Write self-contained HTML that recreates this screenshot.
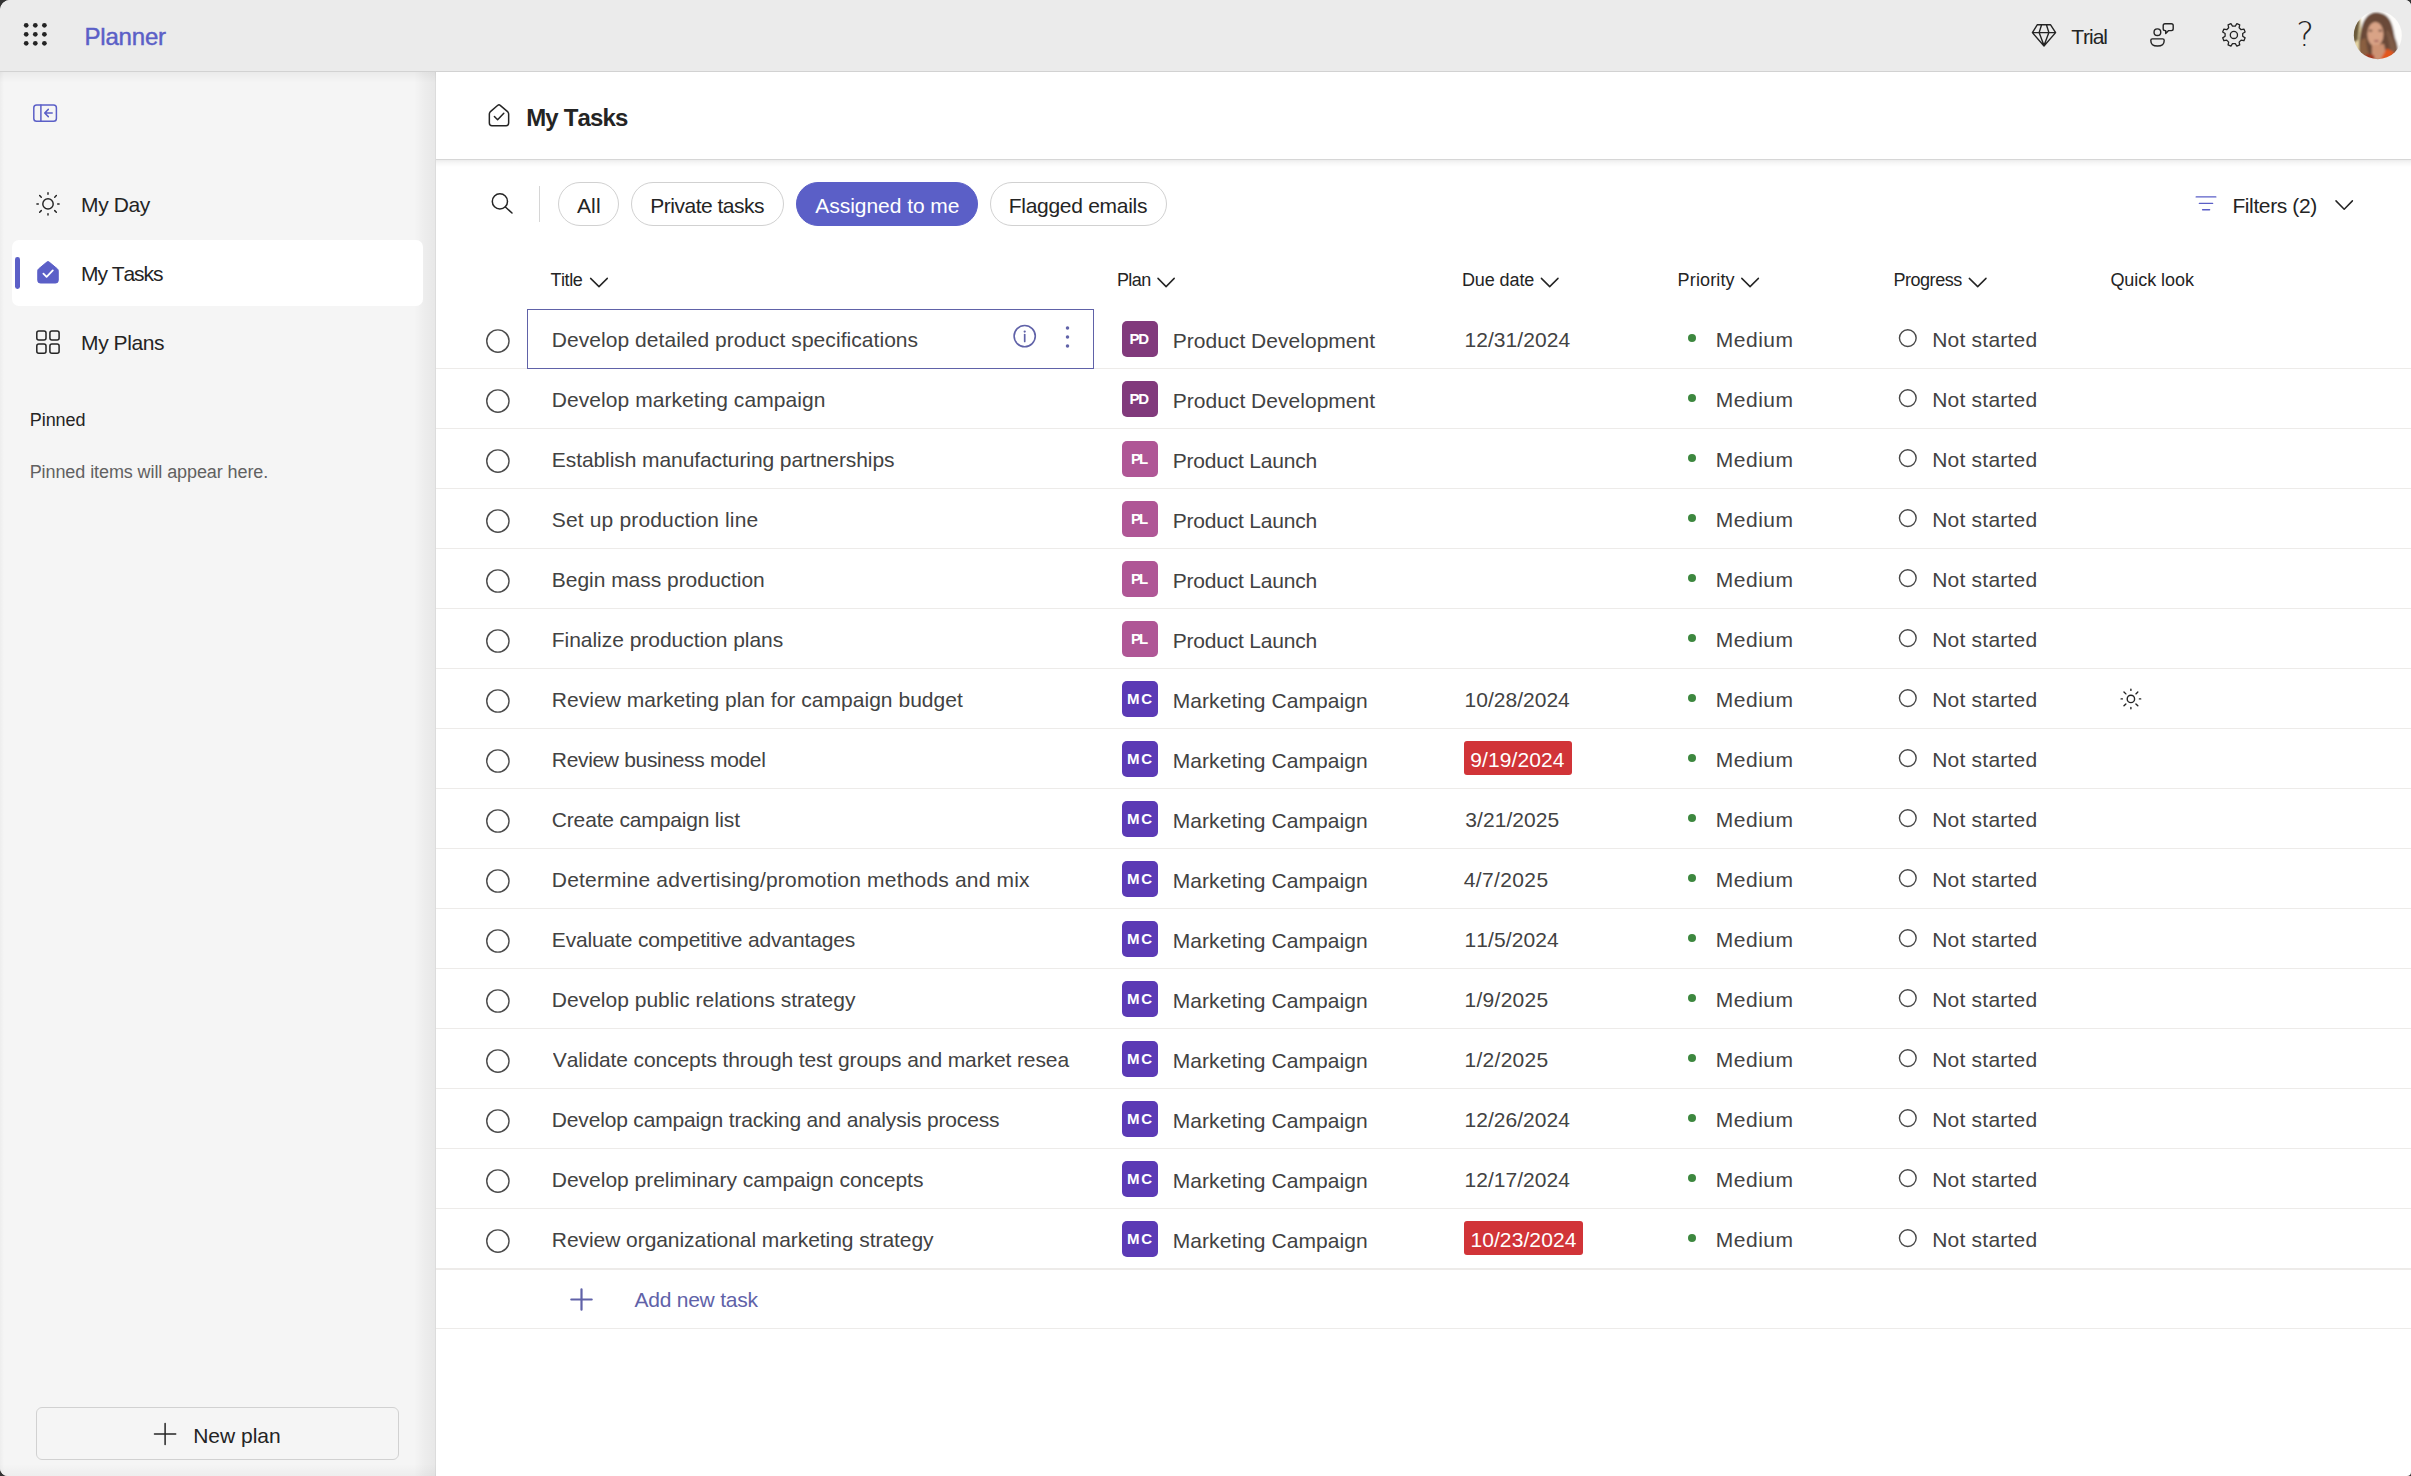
<!DOCTYPE html>
<html lang="en"><head><meta charset="utf-8"><title>Planner - My Tasks</title>
<style>
*{box-sizing:border-box;margin:0;padding:0}
html,body{width:2411px;height:1476px;overflow:hidden;background:#333}
body{font-family:"Liberation Sans",sans-serif;font-kerning:none;position:relative}
#app{position:absolute;left:0;top:0;width:2411px;height:1476px;overflow:hidden;background:#fff;border-radius:10px 6px 4px 8px}
.abs,.t,.bdg,.over,.rl,.ck,.pd,.pc,svg{position:absolute}
.t{white-space:nowrap;line-height:30px;height:30px}
#hdr{left:0;top:0;width:2411px;height:72px;background:#ebebeb;border-bottom:1px solid #d2d2d2}
#side{left:0;top:72px;width:436px;height:1404px;background:linear-gradient(180deg,rgba(0,0,0,.045) 0,rgba(0,0,0,0) 11px),linear-gradient(0deg,rgba(0,0,0,.03) 0,rgba(0,0,0,0) 12px),linear-gradient(90deg,rgba(0,0,0,.03) 0,rgba(0,0,0,0) 4px,rgba(0,0,0,0) 414px,rgba(0,0,0,.03) 424px,rgba(0,0,0,.055) 434.5px,rgba(0,0,0,.1) 435px,rgba(0,0,0,.1) 436px),#f5f5f5}
#sel{left:12px;top:240px;width:411px;height:66px;background:#fff;border-radius:7px}
#selbar{left:15.3px;top:256.8px;width:4.7px;height:32.6px;background:#5b5fc7;border-radius:2.4px}
#newplan{left:36px;top:1407px;width:363px;height:52.5px;border:1px solid #d1d1d1;border-radius:6px;background:#f5f5f5}
#tbar{left:436px;top:72px;width:1975px;height:87px;background:#fff}
#tsh{left:436px;top:159px;width:1975px;height:8px;background:linear-gradient(180deg,rgba(0,0,0,.16) 0,rgba(0,0,0,.16) 1px,rgba(0,0,0,.075) 1px,rgba(0,0,0,.03) 4px,rgba(0,0,0,0) 8px)}
.pill{height:44px;border:1px solid #d1d1d1;border-radius:22px;top:182px;background:#fff}
.pill.on{background:#5b5fc7;border-color:#5b5fc7}
#vdiv{left:539px;top:186px;width:1px;height:36px;background:#d6d6d6}
.bdg{width:36px;height:36px;border-radius:5px}
.over{height:34px;background:#d13438;border-radius:3px}
.rl{left:436px;width:1975px;height:1px;background:#edebe9}
.ck{left:486px;width:24px;height:24px;border:1.6px solid #4a4a4a;border-radius:50%}
.pd{left:1687.8px;width:8.2px;height:8.2px;border-radius:50%;background:#3d883f}
.pc{left:1898.8px;width:18px;height:18px;border:1.4px solid #4a4a4a;border-radius:50%}
#selbox{left:527px;top:309px;width:567px;height:60px;border:1px solid #6062a8}
</style></head><body><div id="app">
<div id="hdr" class="abs"></div>
<div id="side" class="abs"></div>
<div id="sel" class="abs"></div><div id="selbar" class="abs"></div>
<div id="newplan" class="abs"></div>
<div id="tbar" class="abs"></div><div id="tsh" class="abs"></div>
<div id="vdiv" class="abs"></div>
<div class="abs pill" style="left:558px;width:61px"></div>
<div class="abs pill" style="left:631px;width:153px"></div>
<div class="abs pill on" style="left:796px;width:182px"></div>
<div class="abs pill" style="left:990px;width:177px"></div>
<div class="bdg" style="left:1122px;top:321px;background:#813a7c"></div>
<div class="rl" style="top:368px"></div>
<div class="pd" style="top:334.2px"></div>
<div class="bdg" style="left:1122px;top:381px;background:#813a7c"></div>
<div class="rl" style="top:428px"></div>
<div class="pd" style="top:394.2px"></div>
<div class="bdg" style="left:1122px;top:441px;background:#af5796"></div>
<div class="rl" style="top:488px"></div>
<div class="pd" style="top:454.2px"></div>
<div class="bdg" style="left:1122px;top:501px;background:#af5796"></div>
<div class="rl" style="top:548px"></div>
<div class="pd" style="top:514.2px"></div>
<div class="bdg" style="left:1122px;top:561px;background:#af5796"></div>
<div class="rl" style="top:608px"></div>
<div class="pd" style="top:574.2px"></div>
<div class="bdg" style="left:1122px;top:621px;background:#af5796"></div>
<div class="rl" style="top:668px"></div>
<div class="pd" style="top:634.2px"></div>
<div class="bdg" style="left:1122px;top:681px;background:#5b3ab5"></div>
<div class="rl" style="top:728px"></div>
<div class="pd" style="top:694.2px"></div>
<div class="bdg" style="left:1122px;top:741px;background:#5b3ab5"></div>
<div class="over" style="left:1464px;top:741px;width:108.0px"></div>
<div class="rl" style="top:788px"></div>
<div class="pd" style="top:754.2px"></div>
<div class="bdg" style="left:1122px;top:801px;background:#5b3ab5"></div>
<div class="rl" style="top:848px"></div>
<div class="pd" style="top:814.2px"></div>
<div class="bdg" style="left:1122px;top:861px;background:#5b3ab5"></div>
<div class="rl" style="top:908px"></div>
<div class="pd" style="top:874.2px"></div>
<div class="bdg" style="left:1122px;top:921px;background:#5b3ab5"></div>
<div class="rl" style="top:968px"></div>
<div class="pd" style="top:934.2px"></div>
<div class="bdg" style="left:1122px;top:981px;background:#5b3ab5"></div>
<div class="rl" style="top:1028px"></div>
<div class="pd" style="top:994.2px"></div>
<div class="bdg" style="left:1122px;top:1041px;background:#5b3ab5"></div>
<div class="rl" style="top:1088px"></div>
<div class="pd" style="top:1054.2px"></div>
<div class="bdg" style="left:1122px;top:1101px;background:#5b3ab5"></div>
<div class="rl" style="top:1148px"></div>
<div class="pd" style="top:1114.2px"></div>
<div class="bdg" style="left:1122px;top:1161px;background:#5b3ab5"></div>
<div class="rl" style="top:1208px"></div>
<div class="pd" style="top:1174.2px"></div>
<div class="bdg" style="left:1122px;top:1221px;background:#5b3ab5"></div>
<div class="over" style="left:1464px;top:1221px;width:119.0px"></div>
<div class="rl" style="top:1268px"></div>
<div class="pd" style="top:1234.2px"></div>
<div id="selbox" class="abs"></div>
<div class="rl" style="top:1269px"></div><div class="rl" style="top:1328px"></div>
<svg width="2411" height="1476" viewBox="0 0 2411 1476" style="left:0;top:0"><circle cx="26.2" cy="25.3" r="2.35" fill="#242424"/>
<circle cx="35.3" cy="25.3" r="2.35" fill="#242424"/>
<circle cx="44.4" cy="25.3" r="2.35" fill="#242424"/>
<circle cx="26.2" cy="34.3" r="2.35" fill="#242424"/>
<circle cx="35.3" cy="34.3" r="2.35" fill="#242424"/>
<circle cx="44.4" cy="34.3" r="2.35" fill="#242424"/>
<circle cx="26.2" cy="43.3" r="2.35" fill="#242424"/>
<circle cx="35.3" cy="43.3" r="2.35" fill="#242424"/>
<circle cx="44.4" cy="43.3" r="2.35" fill="#242424"/>
<rect x="33.8" y="104.9" width="22.6" height="16.4" rx="2.8" fill="none" stroke="#5b5fc7" stroke-width="1.5"/>
<path d="M40.9 105V121.2M52.2 113H45M48.3 109.4L44.7 113L48.3 116.6" fill="none" stroke="#5b5fc7" stroke-width="1.5" stroke-linecap="round" stroke-linejoin="round"/>
<circle cx="48" cy="203.9" r="5.2" stroke="#242424" stroke-width="1.45" fill="none"/><path d="M57.70 203.90L59.10 203.90M54.72 210.62L56.34 212.24M48.00 213.60L48.00 215.00M41.28 210.62L39.66 212.24M38.30 203.90L36.90 203.90M41.28 197.18L39.66 195.56M48.00 194.20L48.00 192.80M54.72 197.18L56.34 195.56" stroke="#242424" stroke-width="1.45" stroke-linecap="round" fill="none"/>
<path d="M46.80 262.10Q48.00 261.10 49.20 262.10L57.45 268.92Q58.25 269.72 58.25 271.12L58.25 280.40Q58.25 283.00 55.65 283.00L40.35 283.00Q37.75 283.00 37.75 280.40L37.75 271.12Q37.75 269.72 38.55 268.92Z" fill="#5b5fc7" stroke="#5b5fc7" stroke-width="1" stroke-linejoin="round"/><path d="M43.40 273.58L46.60 276.88L52.80 270.38" fill="none" stroke="#ffffff" stroke-width="1.8" stroke-linecap="round" stroke-linejoin="round"/>
<rect x="36.8" y="330.9" width="9.2" height="9.2" rx="2" fill="none" stroke="#242424" stroke-width="1.5"/>
<rect x="49.9" y="330.9" width="9.2" height="9.2" rx="2" fill="none" stroke="#242424" stroke-width="1.5"/>
<rect x="36.8" y="344" width="9.2" height="9.2" rx="2" fill="none" stroke="#242424" stroke-width="1.5"/>
<rect x="49.9" y="344" width="9.2" height="9.2" rx="2" fill="none" stroke="#242424" stroke-width="1.5"/>
<path d="M154.5 1434H175.7M165.1 1423.4V1444.6" stroke="#242424" stroke-width="1.5" stroke-linecap="round" fill="none"/>
<path d="M2037.2 24.8H2050.6L2055.6 32.6L2044 46L2032.4 32.6ZM2032.6 32.6H2055.4M2041.6 24.8L2039.1 32.6L2044 45.6L2048.9 32.6L2046.4 24.8" fill="none" stroke="#242424" stroke-width="1.4" stroke-linejoin="round" stroke-linecap="round"/>
<circle cx="2157.4" cy="32.2" r="3.35" fill="none" stroke="#242424" stroke-width="1.4"/>
<path d="M2152.3 38.9H2162.7Q2164.2 38.9 2164.2 40.4Q2164.2 46 2157.5 46Q2150.8 46 2150.8 40.4Q2150.8 38.9 2152.3 38.9Z" fill="none" stroke="#242424" stroke-width="1.4"/>
<path d="M2165 23.7H2171.4Q2173.2 23.7 2173.2 25.5V28.8Q2173.2 30.6 2171.4 30.6H2168.6L2165.7 33.6V30.6H2165Q2163.2 30.6 2163.2 28.8V25.5Q2163.2 23.7 2165 23.7Z" fill="none" stroke="#242424" stroke-width="1.4" stroke-linejoin="round"/>
<path d="M2245.11 37.87L2243.93 40.73L2241.10 40.13L2239.13 42.10L2239.73 44.93L2236.87 46.11L2235.29 43.69L2232.51 43.69L2230.93 46.11L2228.07 44.93L2228.67 42.10L2226.70 40.13L2223.87 40.73L2222.69 37.87L2225.11 36.29L2225.11 33.51L2222.69 31.93L2223.87 29.07L2226.70 29.67L2228.67 27.70L2228.07 24.87L2230.93 23.69L2232.51 26.11L2235.29 26.11L2236.87 23.69L2239.73 24.87L2239.13 27.70L2241.10 29.67L2243.93 29.07L2245.11 31.93L2242.69 33.51L2242.69 36.29Z" fill="none" stroke="#242424" stroke-width="1.3" stroke-linejoin="round"/><circle cx="2233.9" cy="34.9" r="3.6" fill="none" stroke="#242424" stroke-width="1.3"/>
<defs><clipPath id="av"><circle cx="2377.8" cy="35.2" r="24"/></clipPath><filter id="bl" x="-10%" y="-10%" width="120%" height="120%"><feGaussianBlur stdDeviation="0.9"/></filter></defs>
<g clip-path="url(#av)"><g filter="url(#bl)"><rect x="2350" y="8" width="56" height="56" fill="#fdfcfa"/><rect x="2350" y="18" width="11" height="46" fill="#e6d5a4"/><path d="M2352 20L2360 20L2358 40L2352 44Z" fill="#6b5a3a"/><path d="M2376.4 12.2C2368 12 2363 20 2361 30C2359 40 2358 50 2361 62L2396 62C2399 52 2398 45 2395 38C2393 28 2392 13 2376.4 12.2Z" fill="#6a4a38"/><path d="M2361 40C2359 48 2360 56 2363 62L2372 62C2368 54 2366 46 2366 38Z" fill="#8a5f40"/><path d="M2388 30C2392 38 2397 44 2396 52L2390 54C2390 46 2388 38 2386 32Z" fill="#7d5a45"/><ellipse cx="2375.4" cy="34.2" rx="8.1" ry="12.2" fill="#d9a386"/><path d="M2367.5 30C2368 22 2372 17.5 2378 18C2383 19 2384.5 25 2384 30C2382 24 2379 21.5 2375.5 21.5C2371.5 21.5 2369 25 2367.5 30Z" fill="#6a4a38"/><path d="M2372 45L2384 44L2387 60L2372 60Z" fill="#cd9273"/><path d="M2386.8 48.5L2394.5 52.6L2388 61L2379.5 61Z" fill="#e2571f"/><path d="M2366 54L2373.8 55L2375 61L2364 61Z" fill="#a3361d"/><ellipse cx="2370.6" cy="30.6" rx="1.9" ry="0.9" fill="#4a3026"/><ellipse cx="2380.2" cy="30.6" rx="1.9" ry="0.9" fill="#4a3026"/><ellipse cx="2376.4" cy="41" rx="2.6" ry="1" fill="#a3605a"/></g></g>
<path d="M497.80 105.30Q499.00 104.30 500.20 105.30L507.85 111.92Q508.65 112.72 508.65 114.12L508.65 123.10Q508.65 125.70 506.05 125.70L491.95 125.70Q489.35 125.70 489.35 123.10L489.35 114.12Q489.35 112.72 490.15 111.92Z" fill="none" stroke="#242424" stroke-width="1.5" stroke-linejoin="round"/><path d="M494.40 116.50L497.60 119.80L503.80 113.30" fill="none" stroke="#242424" stroke-width="1.5" stroke-linecap="round" stroke-linejoin="round"/>
<circle cx="499.9" cy="201.4" r="7.6" fill="none" stroke="#242424" stroke-width="1.5"/><path d="M505.4 207L512 213" stroke="#242424" stroke-width="1.5" stroke-linecap="round"/>
<path d="M2196.2 196.9H2215.8M2199.4 203.4H2212.6M2202.6 209.8H2209.6" stroke="#5b5fc7" stroke-width="1.4" stroke-linecap="round"/>
<path d="M2336.0 200.9L2344.2 209.2L2352.4 200.9" stroke="#242424" stroke-width="1.5" fill="none" stroke-linecap="round" stroke-linejoin="round"/>
<path d="M590.6 278.4L599.0 286.6L607.3 278.4" stroke="#242424" stroke-width="1.5" fill="none" stroke-linecap="round" stroke-linejoin="round"/>
<path d="M1158.0 278.4L1166.1 286.6L1174.2 278.4" stroke="#242424" stroke-width="1.5" fill="none" stroke-linecap="round" stroke-linejoin="round"/>
<path d="M1541.4 278.4L1549.7 286.6L1558.0 278.4" stroke="#242424" stroke-width="1.5" fill="none" stroke-linecap="round" stroke-linejoin="round"/>
<path d="M1741.8 278.4L1750.1 286.6L1758.4 278.4" stroke="#242424" stroke-width="1.5" fill="none" stroke-linecap="round" stroke-linejoin="round"/>
<path d="M1969.3 278.4L1977.7 286.6L1986.0 278.4" stroke="#242424" stroke-width="1.5" fill="none" stroke-linecap="round" stroke-linejoin="round"/>
<circle cx="1024.7" cy="336.1" r="10.6" fill="none" stroke="#6062a8" stroke-width="1.6"/><path d="M1024.7 334.6V341.4" stroke="#6062a8" stroke-width="1.7" stroke-linecap="round"/><circle cx="1024.7" cy="331.6" r="1.15" fill="#6062a8"/>
<circle cx="1067.5" cy="327.9" r="1.75" fill="#6062a8"/>
<circle cx="1067.5" cy="337.0" r="1.75" fill="#6062a8"/>
<circle cx="1067.5" cy="346.1" r="1.75" fill="#6062a8"/>
<circle cx="2130.9" cy="698.9" r="3.7" stroke="#242424" stroke-width="1.4" fill="none"/><path d="M2139.40 698.90L2140.70 698.90M2135.92 703.92L2137.83 705.83M2130.90 707.40L2130.90 708.70M2125.88 703.92L2123.97 705.83M2122.40 698.90L2121.10 698.90M2125.88 693.88L2123.97 691.97M2130.90 690.40L2130.90 689.10M2135.92 693.88L2137.83 691.97" stroke="#242424" stroke-width="1.4" stroke-linecap="round" fill="none"/>
<circle cx="497.9" cy="341.0" r="11.15" fill="none" stroke="#4c4c4c" stroke-width="1.45"/>
<circle cx="1907.8" cy="338.1" r="8.35" fill="none" stroke="#484848" stroke-width="1.4"/>
<circle cx="497.9" cy="401.0" r="11.15" fill="none" stroke="#4c4c4c" stroke-width="1.45"/>
<circle cx="1907.8" cy="398.1" r="8.35" fill="none" stroke="#484848" stroke-width="1.4"/>
<circle cx="497.9" cy="461.0" r="11.15" fill="none" stroke="#4c4c4c" stroke-width="1.45"/>
<circle cx="1907.8" cy="458.1" r="8.35" fill="none" stroke="#484848" stroke-width="1.4"/>
<circle cx="497.9" cy="521.0" r="11.15" fill="none" stroke="#4c4c4c" stroke-width="1.45"/>
<circle cx="1907.8" cy="518.1" r="8.35" fill="none" stroke="#484848" stroke-width="1.4"/>
<circle cx="497.9" cy="581.0" r="11.15" fill="none" stroke="#4c4c4c" stroke-width="1.45"/>
<circle cx="1907.8" cy="578.1" r="8.35" fill="none" stroke="#484848" stroke-width="1.4"/>
<circle cx="497.9" cy="641.0" r="11.15" fill="none" stroke="#4c4c4c" stroke-width="1.45"/>
<circle cx="1907.8" cy="638.1" r="8.35" fill="none" stroke="#484848" stroke-width="1.4"/>
<circle cx="497.9" cy="701.0" r="11.15" fill="none" stroke="#4c4c4c" stroke-width="1.45"/>
<circle cx="1907.8" cy="698.1" r="8.35" fill="none" stroke="#484848" stroke-width="1.4"/>
<circle cx="497.9" cy="761.0" r="11.15" fill="none" stroke="#4c4c4c" stroke-width="1.45"/>
<circle cx="1907.8" cy="758.1" r="8.35" fill="none" stroke="#484848" stroke-width="1.4"/>
<circle cx="497.9" cy="821.0" r="11.15" fill="none" stroke="#4c4c4c" stroke-width="1.45"/>
<circle cx="1907.8" cy="818.1" r="8.35" fill="none" stroke="#484848" stroke-width="1.4"/>
<circle cx="497.9" cy="881.0" r="11.15" fill="none" stroke="#4c4c4c" stroke-width="1.45"/>
<circle cx="1907.8" cy="878.1" r="8.35" fill="none" stroke="#484848" stroke-width="1.4"/>
<circle cx="497.9" cy="941.0" r="11.15" fill="none" stroke="#4c4c4c" stroke-width="1.45"/>
<circle cx="1907.8" cy="938.1" r="8.35" fill="none" stroke="#484848" stroke-width="1.4"/>
<circle cx="497.9" cy="1001.0" r="11.15" fill="none" stroke="#4c4c4c" stroke-width="1.45"/>
<circle cx="1907.8" cy="998.1" r="8.35" fill="none" stroke="#484848" stroke-width="1.4"/>
<circle cx="497.9" cy="1061.0" r="11.15" fill="none" stroke="#4c4c4c" stroke-width="1.45"/>
<circle cx="1907.8" cy="1058.1" r="8.35" fill="none" stroke="#484848" stroke-width="1.4"/>
<circle cx="497.9" cy="1121.0" r="11.15" fill="none" stroke="#4c4c4c" stroke-width="1.45"/>
<circle cx="1907.8" cy="1118.1" r="8.35" fill="none" stroke="#484848" stroke-width="1.4"/>
<circle cx="497.9" cy="1181.0" r="11.15" fill="none" stroke="#4c4c4c" stroke-width="1.45"/>
<circle cx="1907.8" cy="1178.1" r="8.35" fill="none" stroke="#484848" stroke-width="1.4"/>
<circle cx="497.9" cy="1241.0" r="11.15" fill="none" stroke="#4c4c4c" stroke-width="1.45"/>
<circle cx="1907.8" cy="1238.1" r="8.35" fill="none" stroke="#484848" stroke-width="1.4"/>
<path d="M571.3 1299.5H591.7M581.5 1289.3V1309.7" stroke="#6062a8" stroke-width="2.2" stroke-linecap="round" fill="none"/></svg>
<span class="t" style="left:84.40px;top:22.00px;font-size:24px;color:#5b5fc7;letter-spacing:-0.172px;-webkit-text-stroke:0.45px #5b5fc7">Planner</span>
<span class="t" style="left:2071.30px;top:22.10px;font-size:21px;color:#242424;letter-spacing:-1.041px">Trial</span>
<span class="t" style="left:2296.20px;top:19.60px;font-size:33.6px;color:#242424;letter-spacing:0.000px;font-weight:200;font-family:'DejaVu Sans Light','DejaVu Sans',sans-serif">?</span>
<span class="t" style="left:81.10px;top:190.40px;font-size:21px;color:#242424;letter-spacing:-0.394px">My Day</span>
<span class="t" style="left:81.10px;top:259.40px;font-size:21px;color:#242424;letter-spacing:-1.076px">My Tasks</span>
<span class="t" style="left:81.10px;top:328.40px;font-size:21px;color:#242424;letter-spacing:-0.437px">My Plans</span>
<span class="t" style="left:29.70px;top:405.10px;font-size:18px;color:#242424;letter-spacing:-0.027px">Pinned</span>
<span class="t" style="left:29.70px;top:457.00px;font-size:18px;color:#616161;letter-spacing:-0.087px">Pinned items will appear here.</span>
<span class="t" style="left:193.20px;top:1420.50px;font-size:21px;color:#242424;letter-spacing:-0.010px">New plan</span>
<span class="t" style="left:526.20px;top:102.90px;font-size:24px;color:#242424;letter-spacing:-0.844px;font-weight:700">My Tasks</span>
<span class="t" style="left:577.00px;top:190.50px;font-size:21px;color:#242424;letter-spacing:0.114px">All</span>
<span class="t" style="left:650.30px;top:190.50px;font-size:21px;color:#242424;letter-spacing:-0.501px">Private tasks</span>
<span class="t" style="left:815.30px;top:190.50px;font-size:21px;color:#ffffff;letter-spacing:-0.043px">Assigned to me</span>
<span class="t" style="left:1008.70px;top:190.50px;font-size:21px;color:#242424;letter-spacing:-0.277px">Flagged emails</span>
<span class="t" style="left:2232.40px;top:191.00px;font-size:21px;color:#242424;letter-spacing:-0.387px">Filters (2)</span>
<span class="t" style="left:550.40px;top:265.30px;font-size:18px;color:#242424;letter-spacing:-0.399px">Title</span>
<span class="t" style="left:1116.90px;top:265.30px;font-size:18px;color:#242424;letter-spacing:-0.539px">Plan</span>
<span class="t" style="left:1461.90px;top:265.30px;font-size:18px;color:#242424;letter-spacing:-0.092px">Due date</span>
<span class="t" style="left:1677.60px;top:265.30px;font-size:18px;color:#242424;letter-spacing:0.142px">Priority</span>
<span class="t" style="left:1893.40px;top:265.30px;font-size:18px;color:#242424;letter-spacing:-0.447px">Progress</span>
<span class="t" style="left:2110.40px;top:265.30px;font-size:18px;color:#242424;letter-spacing:-0.048px">Quick look</span>
<span class="t" style="left:551.80px;top:324.50px;font-size:21px;color:#424242;letter-spacing:0.055px">Develop detailed product specifications</span>
<span class="t" style="left:1172.70px;top:325.50px;font-size:21px;color:#424242;letter-spacing:0.027px">Product Development</span>
<span class="t" style="left:1129.40px;top:323.80px;font-size:15px;color:#ffffff;letter-spacing:-1.105px;font-weight:700">PD</span>
<span class="t" style="left:1464.50px;top:324.50px;font-size:21px;color:#424242;letter-spacing:0.053px">12/31/2024</span>
<span class="t" style="left:1715.70px;top:324.50px;font-size:21px;color:#424242;letter-spacing:0.541px">Medium</span>
<span class="t" style="left:1932.20px;top:324.50px;font-size:21px;color:#424242;letter-spacing:0.227px">Not started</span>
<span class="t" style="left:551.80px;top:384.50px;font-size:21px;color:#424242;letter-spacing:0.064px">Develop marketing campaign</span>
<span class="t" style="left:1172.70px;top:385.50px;font-size:21px;color:#424242;letter-spacing:0.027px">Product Development</span>
<span class="t" style="left:1129.40px;top:383.80px;font-size:15px;color:#ffffff;letter-spacing:-1.105px;font-weight:700">PD</span>
<span class="t" style="left:1715.70px;top:384.50px;font-size:21px;color:#424242;letter-spacing:0.541px">Medium</span>
<span class="t" style="left:1932.20px;top:384.50px;font-size:21px;color:#424242;letter-spacing:0.227px">Not started</span>
<span class="t" style="left:551.80px;top:444.50px;font-size:21px;color:#424242;letter-spacing:-0.080px">Establish manufacturing partnerships</span>
<span class="t" style="left:1172.70px;top:445.50px;font-size:21px;color:#424242;letter-spacing:-0.202px">Product Launch</span>
<span class="t" style="left:1130.90px;top:443.80px;font-size:15px;color:#ffffff;letter-spacing:-1.905px;font-weight:700">PL</span>
<span class="t" style="left:1715.70px;top:444.50px;font-size:21px;color:#424242;letter-spacing:0.541px">Medium</span>
<span class="t" style="left:1932.20px;top:444.50px;font-size:21px;color:#424242;letter-spacing:0.227px">Not started</span>
<span class="t" style="left:551.80px;top:504.50px;font-size:21px;color:#424242;letter-spacing:0.154px">Set up production line</span>
<span class="t" style="left:1172.70px;top:505.50px;font-size:21px;color:#424242;letter-spacing:-0.202px">Product Launch</span>
<span class="t" style="left:1130.90px;top:503.80px;font-size:15px;color:#ffffff;letter-spacing:-1.905px;font-weight:700">PL</span>
<span class="t" style="left:1715.70px;top:504.50px;font-size:21px;color:#424242;letter-spacing:0.541px">Medium</span>
<span class="t" style="left:1932.20px;top:504.50px;font-size:21px;color:#424242;letter-spacing:0.227px">Not started</span>
<span class="t" style="left:551.80px;top:564.50px;font-size:21px;color:#424242;letter-spacing:-0.032px">Begin mass production</span>
<span class="t" style="left:1172.70px;top:565.50px;font-size:21px;color:#424242;letter-spacing:-0.202px">Product Launch</span>
<span class="t" style="left:1130.90px;top:563.80px;font-size:15px;color:#ffffff;letter-spacing:-1.905px;font-weight:700">PL</span>
<span class="t" style="left:1715.70px;top:564.50px;font-size:21px;color:#424242;letter-spacing:0.541px">Medium</span>
<span class="t" style="left:1932.20px;top:564.50px;font-size:21px;color:#424242;letter-spacing:0.227px">Not started</span>
<span class="t" style="left:551.80px;top:624.50px;font-size:21px;color:#424242;letter-spacing:-0.038px">Finalize production plans</span>
<span class="t" style="left:1172.70px;top:625.50px;font-size:21px;color:#424242;letter-spacing:-0.202px">Product Launch</span>
<span class="t" style="left:1130.90px;top:623.80px;font-size:15px;color:#ffffff;letter-spacing:-1.905px;font-weight:700">PL</span>
<span class="t" style="left:1715.70px;top:624.50px;font-size:21px;color:#424242;letter-spacing:0.541px">Medium</span>
<span class="t" style="left:1932.20px;top:624.50px;font-size:21px;color:#424242;letter-spacing:0.227px">Not started</span>
<span class="t" style="left:551.80px;top:684.50px;font-size:21px;color:#424242;letter-spacing:0.033px">Review marketing plan for campaign budget</span>
<span class="t" style="left:1172.70px;top:685.50px;font-size:21px;color:#424242;letter-spacing:0.072px">Marketing Campaign</span>
<span class="t" style="left:1127.00px;top:683.80px;font-size:15px;color:#ffffff;letter-spacing:1.705px;font-weight:700">MC</span>
<span class="t" style="left:1464.50px;top:684.50px;font-size:21px;color:#424242;letter-spacing:0.020px">10/28/2024</span>
<span class="t" style="left:1715.70px;top:684.50px;font-size:21px;color:#424242;letter-spacing:0.541px">Medium</span>
<span class="t" style="left:1932.20px;top:684.50px;font-size:21px;color:#424242;letter-spacing:0.227px">Not started</span>
<span class="t" style="left:551.80px;top:744.50px;font-size:21px;color:#424242;letter-spacing:-0.327px">Review business model</span>
<span class="t" style="left:1172.70px;top:745.50px;font-size:21px;color:#424242;letter-spacing:0.072px">Marketing Campaign</span>
<span class="t" style="left:1127.00px;top:743.80px;font-size:15px;color:#ffffff;letter-spacing:1.705px;font-weight:700">MC</span>
<span class="t" style="left:1470.20px;top:744.50px;font-size:21px;color:#ffffff;letter-spacing:0.107px">9/19/2024</span>
<span class="t" style="left:1715.70px;top:744.50px;font-size:21px;color:#424242;letter-spacing:0.541px">Medium</span>
<span class="t" style="left:1932.20px;top:744.50px;font-size:21px;color:#424242;letter-spacing:0.227px">Not started</span>
<span class="t" style="left:551.80px;top:804.50px;font-size:21px;color:#424242;letter-spacing:-0.168px">Create campaign list</span>
<span class="t" style="left:1172.70px;top:805.50px;font-size:21px;color:#424242;letter-spacing:0.072px">Marketing Campaign</span>
<span class="t" style="left:1127.00px;top:803.80px;font-size:15px;color:#ffffff;letter-spacing:1.705px;font-weight:700">MC</span>
<span class="t" style="left:1465.30px;top:804.50px;font-size:21px;color:#424242;letter-spacing:0.057px">3/21/2025</span>
<span class="t" style="left:1715.70px;top:804.50px;font-size:21px;color:#424242;letter-spacing:0.541px">Medium</span>
<span class="t" style="left:1932.20px;top:804.50px;font-size:21px;color:#424242;letter-spacing:0.227px">Not started</span>
<span class="t" style="left:551.80px;top:864.50px;font-size:21px;color:#424242;letter-spacing:0.187px">Determine advertising/promotion methods and mix</span>
<span class="t" style="left:1172.70px;top:865.50px;font-size:21px;color:#424242;letter-spacing:0.072px">Marketing Campaign</span>
<span class="t" style="left:1127.00px;top:863.80px;font-size:15px;color:#ffffff;letter-spacing:1.705px;font-weight:700">MC</span>
<span class="t" style="left:1463.70px;top:864.50px;font-size:21px;color:#424242;letter-spacing:0.376px">4/7/2025</span>
<span class="t" style="left:1715.70px;top:864.50px;font-size:21px;color:#424242;letter-spacing:0.541px">Medium</span>
<span class="t" style="left:1932.20px;top:864.50px;font-size:21px;color:#424242;letter-spacing:0.227px">Not started</span>
<span class="t" style="left:551.80px;top:924.50px;font-size:21px;color:#424242;letter-spacing:-0.160px">Evaluate competitive advantages</span>
<span class="t" style="left:1172.70px;top:925.50px;font-size:21px;color:#424242;letter-spacing:0.072px">Marketing Campaign</span>
<span class="t" style="left:1127.00px;top:923.80px;font-size:15px;color:#ffffff;letter-spacing:1.705px;font-weight:700">MC</span>
<span class="t" style="left:1464.50px;top:924.50px;font-size:21px;color:#424242;letter-spacing:0.094px">11/5/2024</span>
<span class="t" style="left:1715.70px;top:924.50px;font-size:21px;color:#424242;letter-spacing:0.541px">Medium</span>
<span class="t" style="left:1932.20px;top:924.50px;font-size:21px;color:#424242;letter-spacing:0.227px">Not started</span>
<span class="t" style="left:551.80px;top:984.50px;font-size:21px;color:#424242;letter-spacing:0.006px">Develop public relations strategy</span>
<span class="t" style="left:1172.70px;top:985.50px;font-size:21px;color:#424242;letter-spacing:0.072px">Marketing Campaign</span>
<span class="t" style="left:1127.00px;top:983.80px;font-size:15px;color:#ffffff;letter-spacing:1.705px;font-weight:700">MC</span>
<span class="t" style="left:1464.50px;top:984.50px;font-size:21px;color:#424242;letter-spacing:0.276px">1/9/2025</span>
<span class="t" style="left:1715.70px;top:984.50px;font-size:21px;color:#424242;letter-spacing:0.541px">Medium</span>
<span class="t" style="left:1932.20px;top:984.50px;font-size:21px;color:#424242;letter-spacing:0.227px">Not started</span>
<span class="t" style="left:552.80px;top:1044.50px;font-size:21px;color:#424242;letter-spacing:-0.104px;width:517.4000000000001px;overflow:hidden">Validate concepts through test groups and market research</span>
<span class="t" style="left:1172.70px;top:1045.50px;font-size:21px;color:#424242;letter-spacing:0.072px">Marketing Campaign</span>
<span class="t" style="left:1127.00px;top:1043.80px;font-size:15px;color:#ffffff;letter-spacing:1.705px;font-weight:700">MC</span>
<span class="t" style="left:1464.50px;top:1044.50px;font-size:21px;color:#424242;letter-spacing:0.276px">1/2/2025</span>
<span class="t" style="left:1715.70px;top:1044.50px;font-size:21px;color:#424242;letter-spacing:0.541px">Medium</span>
<span class="t" style="left:1932.20px;top:1044.50px;font-size:21px;color:#424242;letter-spacing:0.227px">Not started</span>
<span class="t" style="left:551.80px;top:1104.50px;font-size:21px;color:#424242;letter-spacing:-0.168px">Develop campaign tracking and analysis process</span>
<span class="t" style="left:1172.70px;top:1105.50px;font-size:21px;color:#424242;letter-spacing:0.072px">Marketing Campaign</span>
<span class="t" style="left:1127.00px;top:1103.80px;font-size:15px;color:#ffffff;letter-spacing:1.705px;font-weight:700">MC</span>
<span class="t" style="left:1464.50px;top:1104.50px;font-size:21px;color:#424242;letter-spacing:0.031px">12/26/2024</span>
<span class="t" style="left:1715.70px;top:1104.50px;font-size:21px;color:#424242;letter-spacing:0.541px">Medium</span>
<span class="t" style="left:1932.20px;top:1104.50px;font-size:21px;color:#424242;letter-spacing:0.227px">Not started</span>
<span class="t" style="left:551.80px;top:1164.50px;font-size:21px;color:#424242;letter-spacing:-0.021px">Develop preliminary campaign concepts</span>
<span class="t" style="left:1172.70px;top:1165.50px;font-size:21px;color:#424242;letter-spacing:0.072px">Marketing Campaign</span>
<span class="t" style="left:1127.00px;top:1163.80px;font-size:15px;color:#ffffff;letter-spacing:1.705px;font-weight:700">MC</span>
<span class="t" style="left:1464.50px;top:1164.50px;font-size:21px;color:#424242;letter-spacing:0.031px">12/17/2024</span>
<span class="t" style="left:1715.70px;top:1164.50px;font-size:21px;color:#424242;letter-spacing:0.541px">Medium</span>
<span class="t" style="left:1932.20px;top:1164.50px;font-size:21px;color:#424242;letter-spacing:0.227px">Not started</span>
<span class="t" style="left:551.80px;top:1224.50px;font-size:21px;color:#424242;letter-spacing:-0.059px">Review organizational marketing strategy</span>
<span class="t" style="left:1172.70px;top:1225.50px;font-size:21px;color:#424242;letter-spacing:0.072px">Marketing Campaign</span>
<span class="t" style="left:1127.00px;top:1223.80px;font-size:15px;color:#ffffff;letter-spacing:1.705px;font-weight:700">MC</span>
<span class="t" style="left:1470.40px;top:1224.50px;font-size:21px;color:#ffffff;letter-spacing:0.097px">10/23/2024</span>
<span class="t" style="left:1715.70px;top:1224.50px;font-size:21px;color:#424242;letter-spacing:0.541px">Medium</span>
<span class="t" style="left:1932.20px;top:1224.50px;font-size:21px;color:#424242;letter-spacing:0.227px">Not started</span>
<span class="t" style="left:634.40px;top:1285.10px;font-size:21px;color:#6062a8;letter-spacing:-0.225px">Add new task</span>
</div></body></html>
